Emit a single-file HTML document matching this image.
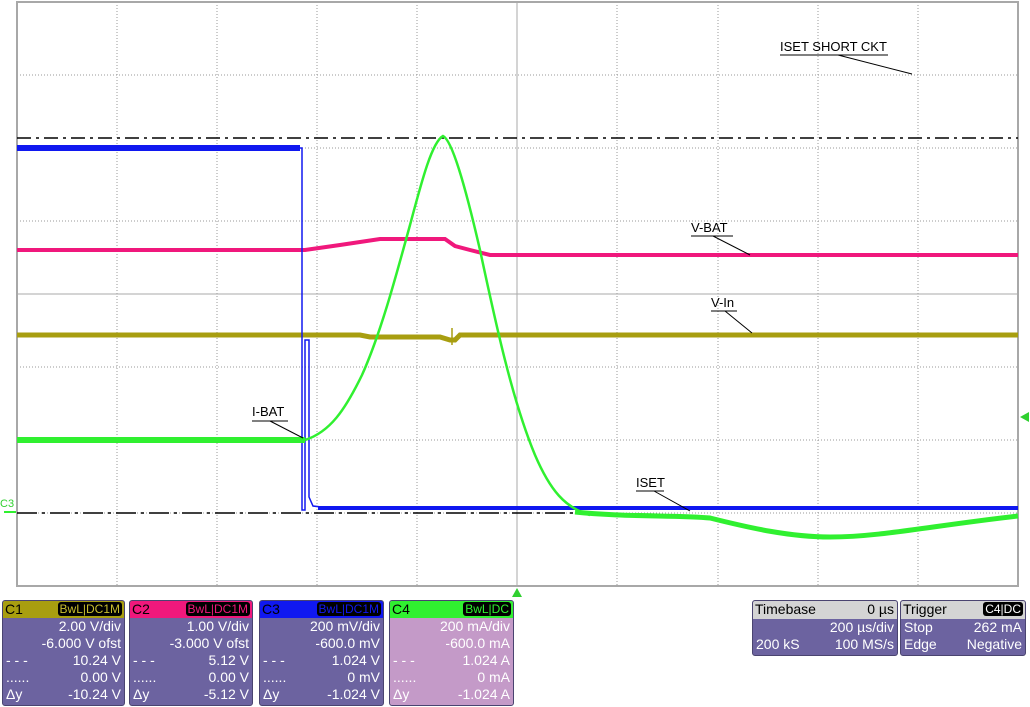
<!DOCTYPE html>
<html><head><meta charset="utf-8"><style>
body{margin:0;width:1030px;height:707px;background:#fff;overflow:hidden;font-family:"Liberation Sans",sans-serif;position:relative}
svg{position:absolute;left:0;top:0}
.p{position:absolute;background:#6c63a0;border:1px solid #4a4470;border-radius:3px;color:#fff;font-size:14px;line-height:17px;overflow:hidden}
.h{height:17px;padding:0 2px;color:#000;position:relative;border-radius:2px 2px 0 0}
.t{position:absolute;right:2px;top:1px;background:#000;border-radius:3px;font-size:12px;line-height:14px;padding:0 2px}
.r{padding:0 3px;position:relative;height:17px}
.r span{position:absolute;right:3px}
</style></head><body>
<svg width="1030" height="707" xmlns="http://www.w3.org/2000/svg">
<g stroke="#999" stroke-width="1" stroke-dasharray="1,2" fill="none">
<path d="M117 2V586M217 2V586M317 2V586M417 2V586M617 2V586M718 2V586M818 2V586M918 2V586"/>
<path d="M17 75H1018M17 148H1018M17 221H1018M17 367H1018M17 440H1018M17 513H1018"/>
</g>
<g stroke="#aaa" stroke-width="1" fill="none"><path d="M517 2V586M17 294H1018"/></g>
<rect x="17" y="2" width="1001" height="584" fill="none" stroke="#a8a8a8" stroke-width="2"/>
<path d="M17 138H1018" stroke="#000" stroke-width="1.5" stroke-dasharray="14,5,3,5"/>
<path d="M17 513H600" stroke="#000" stroke-width="1.5" stroke-dasharray="20,5,3,5"/>
<path d="M17 335H360L370 337H440L450 340H455L460 335H1018" stroke="#a89e10" stroke-width="5" fill="none"/>
<path d="M452 328V345" stroke="#a89e10" stroke-width="1.5"/>
<path d="M17 250H305L340 245L380 239H445L455 246L470 250L490 255H1018" stroke="#f0187c" stroke-width="4" fill="none"/>
<path d="M17 148H302V510H305V340H309V497L313 506L330 508H1018" stroke="#1018f0" stroke-width="1.5" fill="none"/>
<path d="M17 148H300" stroke="#1018f0" stroke-width="6" fill="none"/>
<path d="M318 508H1018" stroke="#1018f0" stroke-width="4" fill="none"/>
<path d="M17 440H305" stroke="#30f030" stroke-width="6" fill="none"/>
<path d="M305 440C330 432 345 410 362 375C380 335 395 280 410 225C422 180 432 142 443 136C452 140 465 185 480 250C495 320 512 400 535 455C550 490 565 508 590 515" stroke="#30f030" stroke-width="2.5" fill="none"/>
<path d="M575 512C620 517 680 515 710 518C750 528 790 537 830 537C880 537 930 526 1018 516" stroke="#30f030" stroke-width="5" fill="none"/>
<g font-family="Liberation Sans,sans-serif" font-size="13" fill="#000">
<text x="780" y="51">ISET SHORT CKT</text><path d="M780 55H888M838 55L912 74" stroke="#000"/>
<text x="691" y="232">V-BAT</text><path d="M691 236H733M713 236L750 255" stroke="#000"/>
<text x="711" y="307">V-In</text><path d="M711 311H737M725 311L752 333" stroke="#000"/>
<text x="252" y="416">I-BAT</text><path d="M252 421H288M270 421L303 438" stroke="#000"/>
<text x="636" y="487">ISET</text><path d="M636 491H664M654 491L690 511" stroke="#000"/>
</g>
<text x="0" y="507" font-size="11" fill="#30d030" font-family="Liberation Sans,sans-serif">C3</text>
<path d="M4 513H16V511H4Z" fill="#30f030"/>
<path d="M1020 417L1029 412V422Z" fill="#30d030"/>
<path d="M517 588L512 597H522Z" fill="#30d030"/>
</svg>

<div class="p" style="left:2px;top:600px;width:121px;height:104px">
<div class="h" style="background:#a89e10">C1<span class="t" style="color:#c8be30">BwL|DC1M</span></div>
<div class="r"><span>2.00 V/div</span></div><div class="r"><span>-6.000 V ofst</span></div>
<div class="r">- - -<span>10.24 V</span></div><div class="r">......<span>0.00 V</span></div><div class="r">Δy<span>-10.24 V</span></div></div>
<div class="p" style="left:129px;top:600px;width:122px;height:104px">
<div class="h" style="background:#f0187c">C2<span class="t" style="color:#f0187c">BwL|DC1M</span></div>
<div class="r"><span>1.00 V/div</span></div><div class="r"><span>-3.000 V ofst</span></div>
<div class="r">- - -<span>5.12 V</span></div><div class="r">......<span>0.00 V</span></div><div class="r">Δy<span>-5.12 V</span></div></div>
<div class="p" style="left:259px;top:600px;width:123px;height:104px">
<div class="h" style="background:#1018f0">C3<span class="t" style="color:#1018f0">BwL|DC1M</span></div>
<div class="r"><span>200 mV/div</span></div><div class="r"><span>-600.0 mV</span></div>
<div class="r">- - -<span>1.024 V</span></div><div class="r">......<span>0 mV</span></div><div class="r">Δy<span>-1.024 V</span></div></div>
<div class="p" style="left:389px;top:600px;width:123px;height:104px;background:#c49ac8">
<div class="h" style="background:#30f030">C4<span class="t" style="color:#30f030">BwL|DC</span></div>
<div class="r"><span>200 mA/div</span></div><div class="r"><span>-600.0 mA</span></div>
<div class="r">- - -<span>1.024 A</span></div><div class="r">......<span>0 mA</span></div><div class="r">Δy<span>-1.024 A</span></div></div>
<div class="p" style="left:752px;top:600px;width:144px;height:54px">
<div class="h" style="background:#d4d4d4;height:18px">Timebase<span style="position:absolute;right:3px">0 µs</span></div>
<div class="r"><span>200 µs/div</span></div><div class="r">200 kS<span>100 MS/s</span></div></div>
<div class="p" style="left:900px;top:600px;width:124px;height:54px">
<div class="h" style="background:#d4d4d4;height:18px">Trigger<span class="t" style="color:#fff">C4|DC</span></div>
<div class="r">Stop<span>262 mA</span></div><div class="r">Edge<span>Negative</span></div></div>
</body></html>
